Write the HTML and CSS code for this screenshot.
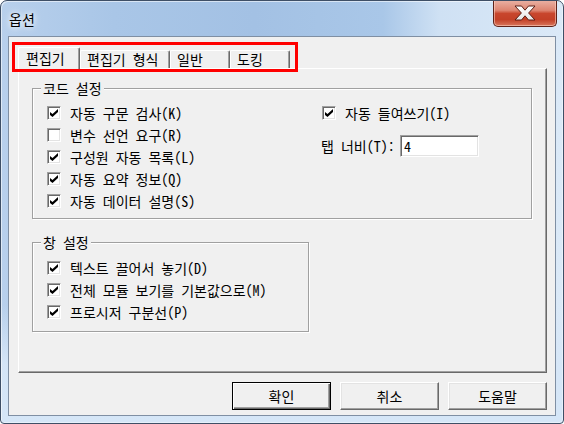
FILE: index.html
```html
<!DOCTYPE html>
<html lang="ko">
<head>
<meta charset="utf-8">
<title>옵션</title>
<link rel="stylesheet" href="styles.css">
</head>
<body>
<div class="window">
  <div class="titlebar">
    <span class="title">옵션</span>
    <div class="close" aria-label="닫기">
      <svg class="close-x" width="22" height="16" viewBox="0 0 22 16">
        <defs>
          <linearGradient id="xg" x1="0" y1="0" x2="0" y2="1">
            <stop offset="0" stop-color="#ffffff"/>
            <stop offset="1" stop-color="#e6e6e6"/>
          </linearGradient>
        </defs>
        <path d="M1 1 H7.5 L11 5.2 L14.5 1 H21 L14.6 8 L21 15 H14.5 L11 10.8 L7.5 15 H1 L7.4 8 Z" fill="url(#xg)" stroke="#5a1f16" stroke-width="1" stroke-linejoin="round"/>
      </svg>
    </div>
  </div>
  <div class="client">
    <div class="tabs">
      <div class="tab tab-active w62">편집기</div>
      <div class="tab w90">편집기 형식</div>
      <div class="tab w60">일반</div>
      <div class="tab w60">도킹</div>
    </div>
    <div class="panel">
      <div class="group group-code">
        <span class="group-title">코드 설정</span>
        <div class="cols">
          <div class="col">
            <div class="check"><span class="box on"></span><span class="label">자동 구문 검사(K)</span></div>
            <div class="check"><span class="box"></span><span class="label">변수 선언 요구(R)</span></div>
            <div class="check"><span class="box on"></span><span class="label">구성원 자동 목록(L)</span></div>
            <div class="check"><span class="box on"></span><span class="label">자동 요약 정보(Q)</span></div>
            <div class="check"><span class="box on"></span><span class="label">자동 데이터 설명(S)</span></div>
          </div>
          <div class="col">
            <div class="check"><span class="box on"></span><span class="label">자동 들여쓰기(I)</span></div>
            <div class="field"><span class="field-label">탭 너비(T):</span><span class="input">4</span></div>
          </div>
        </div>
      </div>
      <div class="group group-window">
        <span class="group-title">창 설정</span>
        <div class="rows">
          <div class="check"><span class="box on"></span><span class="label">텍스트 끌어서 놓기(D)</span></div>
          <div class="check"><span class="box on"></span><span class="label">전체 모듈 보기를 기본값으로(M)</span></div>
          <div class="check"><span class="box on"></span><span class="label">프로시저 구분선(P)</span></div>
        </div>
      </div>
    </div>
    <div class="buttons">
      <div class="btn btn-default">확인</div>
      <div class="btn">취소</div>
      <div class="btn">도움말</div>
    </div>
  </div>
  <div class="highlight"></div>
</div>
</body>
</html>
```

FILE: styles.css
```css
* { box-sizing: border-box; }
html, body { margin: 0; padding: 0; }
body {
  width: 564px;
  height: 424px;
  overflow: hidden;
  background: #ffffff;
  font-family: "Noto Sans Mono CJK KR", "Noto Sans CJK KR", "Noto Sans", sans-serif;
  font-size: 14px;
  color: #000;
}
.window {
  position: relative;
  width: 564px;
  height: 424px;
  border: 1px solid #3e4f66;
  border-radius: 7px 7px 4px 4px;
  overflow: hidden;
  display: flex;
  flex-direction: column;
  background:
    linear-gradient(to bottom, rgba(214,230,247,0) 0%, rgba(214,230,247,0) 72%, rgba(214,230,247,0.95) 86%, #d5e6f7 100%),
    linear-gradient(to right, #b8d0ec 0%, #a9c6e7 20%, #a3c1e4 45%, #a9c7e8 68%, #cfe1f4 78%, #dbe9f7 100%);
  box-shadow: inset 1px 1px 0 rgba(255,255,255,0.55), inset -1px -1px 0 rgba(255,255,255,0.4);
}
.titlebar {
  flex: none;
  height: 35px;
  display: flex;
  align-items: flex-start;
}
.title {
  margin: 9px 0 0 8px;
  line-height: 18px;
  font-size: 14px;
  text-shadow: 0 0 5px #ffffff, 0 0 9px rgba(255,255,255,0.9);
}
.close {
  margin: -1px 6px 0 auto;
  width: 64px;
  height: 27px;
  border: 1px solid #5e2219;
  border-top: none;
  border-radius: 0 0 5px 5px;
  background: linear-gradient(to bottom, #eab3a6 0%, #dd8470 40%, #c8462d 52%, #c34027 75%, #d8765c 100%);
  box-shadow: inset 0 0 0 1px rgba(255,215,200,0.55);
  display: flex;
  align-items: center;
  justify-content: center;
}
.close-x { display: block; margin-top: -1px; }
.client {
  flex: none;
  margin: 0 7px;
  height: 380px;
  border: 1px solid #7f8fa3;
  background: #f0f0f0;
  padding: 10px 8px 5px 9px;
  display: flex;
  flex-direction: column;
}
.tabs {
  flex: none;
  height: 21px;
  display: flex;
  align-items: flex-end;
  position: relative;
  z-index: 2;
}
.tab {
  height: 18px;
  padding: 0 0 0 6px;
  line-height: 16px;
  border-top: 1px solid #ffffff;
  border-left: 1px solid #ffffff;
  border-right: 1px solid #696969;
  box-shadow: inset -1px 0 0 #a0a0a0;
  border-radius: 2px 2px 0 0;
  background: #f0f0f0;
  white-space: nowrap;
}
.tab-active {
  height: 22px;
  margin-bottom: -1px;
  line-height: 20px;
  padding-left: 7px;
}
.w62 { width: 62px; }
.w90 { width: 90px; }
.w60 { width: 60px; }
.panel {
  flex: none;
  height: 305px;
  border: 1px solid;
  border-color: #ffffff #696969 #696969 #ffffff;
  box-shadow: inset -1px -1px 0 #a0a0a0;
  padding: 0 13px;
}
.group {
  border: 1px solid #a0a0a0;
  box-shadow: inset 1px 1px 0 #ffffff, 1px 1px 0 #ffffff;
  padding: 0 0 6px 14px;
}
.group-title {
  display: table;
  margin: -8px 0 0 -6px;
  padding: 0 2px;
  line-height: 14px;
  background: #f0f0f0;
}
.group-code {
  width: 500px;
  margin-top: 19px;
}
.group-window {
  width: 277px;
  margin-top: 23px;
  padding-bottom: 8px;
}
.cols {
  display: grid;
  grid-template-columns: 275px 1fr;
  margin-top: 7px;
}
.rows { margin-top: 8px; }
.check {
  height: 22px;
  display: flex;
  align-items: center;
  white-space: nowrap;
}
.label { line-height: 16px; }
.box {
  position: relative;
  flex: none;
  width: 14px;
  height: 14px;
  margin-right: 9px;
  border: 1px solid;
  border-color: #a0a0a0 #ffffff #ffffff #a0a0a0;
  box-shadow: inset 1px 1px 0 #696969, inset -1px -1px 0 #e3e3e3;
  background: #ffffff;
}
.box.on::after {
  content: "";
  position: absolute;
  left: 2px;
  top: 2px;
  width: 8px;
  height: 8px;
  background: #000;
  clip-path: polygon(0px 3px, 2.5px 5px, 8px 0px, 8px 3px, 2.5px 8px, 0px 6px);
}
.field {
  height: 22px;
  margin-top: 11px;
  display: flex;
  align-items: center;
}
.field-label {
  width: 79px;
  margin-left: -1px;
  line-height: 16px;
  white-space: nowrap;
}
.input {
  width: 79px;
  height: 22px;
  border: 1px solid;
  border-color: #a0a0a0 #ffffff #ffffff #a0a0a0;
  box-shadow: inset 1px 1px 0 #696969, inset -1px -1px 0 #e3e3e3;
  background: #ffffff;
  padding: 0 3px;
  line-height: 20px;
}
.buttons {
  flex: none;
  display: flex;
  justify-content: flex-end;
  gap: 9px;
  margin-top: 9px;
}
.btn {
  width: 99px;
  height: 28px;
  border: 1px solid;
  border-color: #ffffff #696969 #696969 #ffffff;
  box-shadow: inset -1px -1px 0 #a0a0a0, inset 1px 1px 0 #e3e3e3;
  background: #f0f0f0;
  text-align: center;
  line-height: 26px;
}
.btn-default {
  border-color: #000000;
  box-shadow: inset 1px 1px 0 #ffffff, inset -1px -1px 0 #696969, inset -2px -2px 0 #a0a0a0;
}
.highlight {
  position: absolute;
  left: 11px;
  top: 41px;
  width: 286px;
  height: 30px;
  border: 3px solid #ff0000;
  pointer-events: none;
}
```
